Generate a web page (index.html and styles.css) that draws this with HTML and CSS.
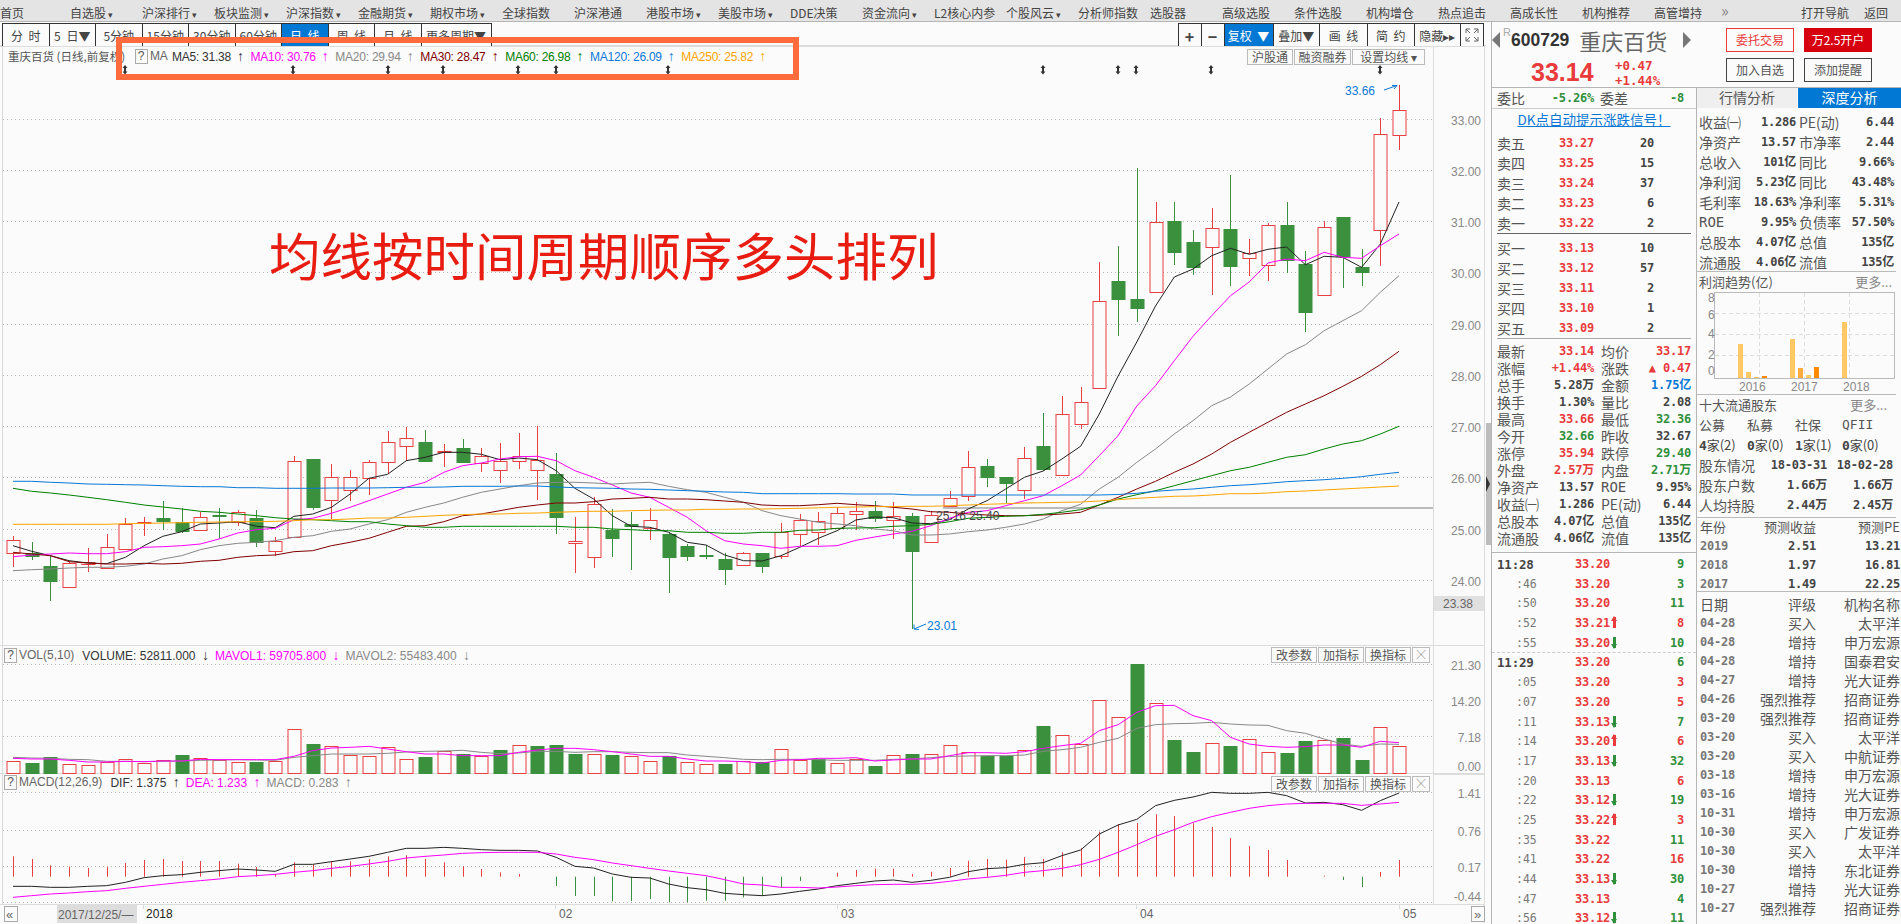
FILE: index.html
```html
<!DOCTYPE html>
<html lang="zh-CN">
<head>
  <meta charset="UTF-8">
  <title>重庆百货 600729</title>
  <link rel="stylesheet" href="styles.css">
</head>
<body>

  <!-- 顶部菜单 -->
  <div class="menu">
    <span class="home">首页</span>
    <span class="more">自选股</span><span class="more">沪深排行</span><span class="more">板块监测</span><span class="more">沪深指数</span><span class="more">金融期货</span><span class="more">期权市场</span><span>全球指数</span><span>沪深港通</span><span class="more">港股市场</span><span class="more">美股市场</span><span>DDE决策</span><span class="more">资金流向</span><span>L2核心内参</span><span class="more">个股风云</span><span>分析师指数</span><span>选股器</span><span>高级选股</span><span>条件选股</span><span>机构增仓</span><span>热点追击</span><span>高成长性</span><span>机构推荐</span><span>高管增持</span>
    <span class="dbl">»</span>
    <span class="nav-open">打开导航</span>
    <span class="nav-back">返回</span>
  </div>

  <div class="main">
    <!-- 左侧 K线 -->
    <div class="left">
      <div class="toolbar">
        <div class="btn-group">
          <button class="w47">分 时</button><button class="w47">5 日▼</button><button class="w47">5分钟</button><button class="w47">15分钟</button><button class="w47">30分钟</button><button class="w47">60分钟</button><button class="w47 on">日 线</button><button class="w47">周 线</button><button class="w47">月 线</button><button class="w70">更多周期▼</button>
        </div>
        <div class="btn-group">
          <button class="w24 big">+</button><button class="w24 big">−</button><button class="w50 on">复权 ▼</button><button class="w47">叠加▼</button><button class="w49">画 线</button><button class="w47">简 约</button><button class="w47">隐藏▸▸</button><button class="w24"><svg class="full-ico" viewBox="0 0 14 14" width="14" height="14"><path d="M1 5V1H5M1 1L5 5M9 1H13V5M13 1L9 5M1 9V13H5M1 13L5 9M13 9V13H9M13 13L9 9"/></svg></button>
        </div>
      </div>

      <div class="chart">
        <svg id="kline" viewBox="0 47 1486 877" width="1486" height="877"></svg>

        <div class="legend">
          <span class="stock-name">重庆百货 (日线,前复权)</span>
          <span class="q">?</span>
          <span class="c-gray">MA</span>
          <span class="c-ma5">MA5: 31.38 <i>↑</i></span>
          <span class="c-ma10">MA10: 30.76 <i>↑</i></span>
          <span class="c-ma20">MA20: 29.94 <i>↑</i></span>
          <span class="c-ma30">MA30: 28.47 <i>↑</i></span>
          <span class="c-ma60">MA60: 26.98 <i>↑</i></span>
          <span class="c-ma120">MA120: 26.09 <i>↑</i></span>
          <span class="c-ma250">MA250: 25.82 <i>↑</i></span>
        </div>

        <div class="tools tools-main">
          <span class="tool t45">沪股通</span><span class="tool t56">融资融券</span><span class="tool t72">设置均线 ▾</span>
        </div>

        <div class="panel-head head-vol">
          <span class="q">?</span>
          <span class="c-gray">VOL(5,10)</span>
          <span class="c-ma5">VOLUME: 52811.000 <i>↓</i></span>
          <span class="c-ma10">MAVOL1: 59705.800 <i>↓</i></span>
          <span class="c-ma20">MAVOL2: 55483.400 <i>↓</i></span>
        </div>
        <div class="tools tools-vol">
          <span class="tool t45">改参数</span><span class="tool t45">加指标</span><span class="tool t45">换指标</span><span class="tool t16">╳</span>
        </div>

        <div class="panel-head head-macd">
          <span class="q">?</span>
          <span class="c-gray">MACD(12,26,9)</span>
          <span class="c-ma5">DIF: 1.375 <i>↑</i></span>
          <span class="c-ma10">DEA: 1.233 <i>↑</i></span>
          <span class="c-ma20">MACD: 0.283 <i>↑</i></span>
        </div>
        <div class="tools tools-macd">
          <span class="tool t45">改参数</span><span class="tool t45">加指标</span><span class="tool t45">换指标</span><span class="tool t16">╳</span>
        </div>

        <div class="note">均线按时间周期顺序多头排列</div>
        <div class="mark-box"></div>
      </div>
    </div>

    <!-- 分隔滑条 -->
    <div class="rail"><div class="thumb"><i></i></div></div>

    <!-- 右侧行情 -->
    <div class="side">
      <div class="quote">
        <div class="quote-main">
          <div class="quote-name">
            <i class="tri-l"></i>
            <sup>R</sup>
            <span class="code">600729</span>
            <span class="name">重庆百货</span>
            <i class="tri-r"></i>
          </div>
          <div class="quote-price">
            <span class="last">33.14</span>
            <div class="chg"><b>+0.47</b><b>+1.44%</b></div>
          </div>
        </div>
        <div class="quote-btns">
          <a class="qb red-line">委托交易</a>
          <a class="qb red-fill">万2.5开户</a>
          <a class="qb">加入自选</a>
          <a class="qb">添加提醒</a>
        </div>
      </div>

      <div class="side-body">
        <div class="col-a">
          <div class="weibi">
            <span>委比</span><b class="dn">-5.26%</b><span>委差</span><b class="dn">-8</b>
          </div>
          <div class="dk"><a>DK点自动提示涨跌信号！</a></div>

          <div class="book line-b">
            <div class="bk"><span>卖五</span><b class="up">33.27</b><b>20</b></div>
            <div class="bk"><span>卖四</span><b class="up">33.25</b><b>15</b></div>
            <div class="bk"><span>卖三</span><b class="up">33.24</b><b>37</b></div>
            <div class="bk"><span>卖二</span><b class="up">33.23</b><b>6</b></div>
            <div class="bk"><span>卖一</span><b class="up">33.22</b><b>2</b></div>
          </div>
          <div class="book line-b pad-t">
            <div class="bk"><span>买一</span><b class="up">33.13</b><b>10</b></div>
            <div class="bk"><span>买二</span><b class="up">33.12</b><b>57</b></div>
            <div class="bk"><span>买三</span><b class="up">33.11</b><b>2</b></div>
            <div class="bk"><span>买四</span><b class="up">33.10</b><b>1</b></div>
            <div class="bk"><span>买五</span><b class="up">33.09</b><b>2</b></div>
          </div>

          <div class="stats">
            <div class="st"><span>最新</span><b class="up">33.14</b><span>均价</span><b class="up">33.17</b></div>
            <div class="st"><span>涨幅</span><b class="up">+1.44%</b><span>涨跌</span><b class="up">▲ 0.47</b></div>
            <div class="st"><span>总手</span><b>5.28万</b><span>金额</span><b class="blue">1.75亿</b></div>
            <div class="st"><span>换手</span><b>1.30%</b><span>量比</span><b>2.08</b></div>
            <div class="st"><span>最高</span><b class="up">33.66</b><span>最低</span><b class="dn">32.36</b></div>
            <div class="st"><span>今开</span><b class="dn">32.66</b><span>昨收</span><b>32.67</b></div>
            <div class="st"><span>涨停</span><b class="up">35.94</b><span>跌停</span><b class="dn">29.40</b></div>
            <div class="st"><span>外盘</span><b class="up">2.57万</b><span>内盘</span><b class="dn">2.71万</b></div>
            <div class="st"><span>净资产</span><b>13.57</b><span class="latin">ROE</span><b>9.95%</b></div>
            <div class="st"><span>收益㈠</span><b>1.286</b><span>PE(动)</span><b>6.44</b></div>
            <div class="st"><span>总股本</span><b>4.07亿</b><span>总值</span><b>135亿</b></div>
            <div class="st"><span>流通股</span><b>4.06亿</b><span>流值</span><b>135亿</b></div>
          </div>

          <div class="ticks">
            <div class="tk"><b class="hm">11:28</b><b class="up">33.20</b><b class="dn">9</b></div>
            <div class="tk"><span>:46</span><b class="up">33.20</b><b class="dn">3</b></div>
            <div class="tk"><span>:50</span><b class="up">33.20</b><b class="dn">11</b></div>
            <div class="tk"><span>:52</span><b class="up">33.21<i class="arr a-up"></i></b><b class="up">8</b></div>
            <div class="tk dash"><span>:55</span><b class="up">33.20<i class="arr a-dn"></i></b><b class="dn">10</b></div>
            <div class="tk"><b class="hm">11:29</b><b class="up">33.20</b><b class="dn">6</b></div>
            <div class="tk"><span>:05</span><b class="up">33.20</b><b class="up">3</b></div>
            <div class="tk"><span>:07</span><b class="up">33.20</b><b class="up">5</b></div>
            <div class="tk"><span>:11</span><b class="up">33.13<i class="arr a-dn"></i></b><b class="dn">7</b></div>
            <div class="tk"><span>:14</span><b class="up">33.20<i class="arr a-up"></i></b><b class="up">6</b></div>
            <div class="tk"><span>:17</span><b class="up">33.13<i class="arr a-dn"></i></b><b class="dn">32</b></div>
            <div class="tk"><span>:20</span><b class="up">33.13</b><b class="up">6</b></div>
            <div class="tk"><span>:22</span><b class="up">33.12<i class="arr a-dn"></i></b><b class="dn">19</b></div>
            <div class="tk"><span>:25</span><b class="up">33.22<i class="arr a-up"></i></b><b class="up">3</b></div>
            <div class="tk"><span>:35</span><b class="up">33.22</b><b class="dn">11</b></div>
            <div class="tk"><span>:41</span><b class="up">33.22</b><b class="up">16</b></div>
            <div class="tk"><span>:44</span><b class="up">33.13<i class="arr a-dn"></i></b><b class="dn">30</b></div>
            <div class="tk"><span>:47</span><b class="up">33.13</b><b class="dn">4</b></div>
            <div class="tk"><span>:56</span><b class="up">33.12<i class="arr a-dn"></i></b><b class="dn">11</b></div>
          </div>
        </div>

        <div class="col-b">
          <div class="tabs"><span>行情分析</span><span class="on">深度分析</span></div>

          <div class="fund">
            <div class="fd"><span>收益㈠</span><b>1.286</b><span>PE(动)</span><b>6.44</b></div>
            <div class="fd"><span>净资产</span><b>13.57</b><span>市净率</span><b>2.44</b></div>
            <div class="fd"><span>总收入</span><b>101亿</b><span>同比</span><b>9.66%</b></div>
            <div class="fd"><span>净利润</span><b>5.23亿</b><span>同比</span><b>43.48%</b></div>
            <div class="fd"><span>毛利率</span><b>18.63%</b><span>净利率</span><b>5.31%</b></div>
            <div class="fd"><span class="latin">ROE</span><b>9.95%</b><span>负债率</span><b>57.50%</b></div>
            <div class="fd"><span>总股本</span><b>4.07亿</b><span>总值</span><b>135亿</b></div>
            <div class="fd"><span>流通股</span><b>4.06亿</b><span>流值</span><b>135亿</b></div>
          </div>

          <div class="sec-title"><span>利润趋势(亿)</span><span class="more-link">更多...</span></div>
          <svg class="profit" viewBox="1698 293 203 102" width="203" height="102">
            <rect class="p-frame" x="1715.5" y="293.5" width="180" height="86"/>
            <path class="p-grid" d="M1760.5 294V379M1805.5 294V379M1850.5 294V379M1716 314.5H1895M1716 335.5H1895M1716 356.5H1895"/>
            <rect class="p-bar" x="1739" y="345" width="5" height="34"/>
            <rect class="p-bar" x="1747" y="373" width="5" height="6"/>
            <rect class="p-bar" x="1755" y="378" width="5" height="1"/>
            <rect class="p-bar2" x="1763" y="377" width="5" height="2"/>
            <rect class="p-bar" x="1791" y="340" width="5" height="39"/>
            <rect class="p-bar3" x="1799" y="369" width="5" height="10"/>
            <rect class="p-bar" x="1807" y="376" width="5" height="3"/>
            <rect class="p-bar2" x="1815" y="368" width="5" height="11"/>
            <rect class="p-bar" x="1843" y="323" width="5" height="56"/>
            <text class="p-y" x="1709" y="303">8</text>
            <text class="p-y" x="1709" y="320">6</text>
            <text class="p-y" x="1709" y="339">4</text>
            <text class="p-y" x="1709" y="360">2</text>
            <text class="p-y" x="1709" y="376">0</text>
            <text class="p-x" x="1740" y="392">2016</text>
            <text class="p-x" x="1792" y="392">2017</text>
            <text class="p-x" x="1844" y="392">2018</text>
          </svg>

          <div class="holders">
            <div class="sec-title"><span>十大流通股东</span><span class="more-link">更多...</span></div>
            <div class="h4"><span>公募</span><span>私募</span><span>社保</span><span class="latin">QFII</span></div>
            <div class="h4 h4b"><span><b>4</b>家(2)</span><span><b>0</b>家(0)</span><span><b>1</b>家(1)</span><span><b>0</b>家(0)</span></div>
            <div class="h3"><span>股东情况</span><b>18-03-31</b><b>18-02-28</b></div>
            <div class="h3"><span>股东户数</span><b>1.66万</b><b>1.66万</b></div>
            <div class="h3"><span>人均持股</span><b>2.44万</b><b>2.45万</b></div>
          </div>

          <div class="forecast">
            <div class="fc fc-h"><span>年份</span><span>预测收益</span><span>预测PE</span></div>
            <div class="fc"><b class="muted">2019</b><b>2.51</b><b>13.21</b></div>
            <div class="fc"><b class="muted">2018</b><b>1.97</b><b>16.81</b></div>
            <div class="fc"><b class="muted">2017</b><b>1.49</b><b>22.25</b></div>
          </div>

          <div class="ratings">
            <div class="rt"><span>日期</span><span>评级</span><span>机构名称</span></div>
            <div class="rt"><b>04-28</b><span>买入</span><span>太平洋</span></div>
            <div class="rt"><b>04-28</b><span>增持</span><span>申万宏源</span></div>
            <div class="rt"><b>04-28</b><span>增持</span><span>国泰君安</span></div>
            <div class="rt"><b>04-27</b><span>增持</span><span>光大证券</span></div>
            <div class="rt"><b>04-26</b><span>强烈推荐</span><span>招商证券</span></div>
            <div class="rt"><b>03-20</b><span>强烈推荐</span><span>招商证券</span></div>
            <div class="rt"><b>03-20</b><span>买入</span><span>太平洋</span></div>
            <div class="rt"><b>03-20</b><span>买入</span><span>中航证券</span></div>
            <div class="rt"><b>03-18</b><span>增持</span><span>申万宏源</span></div>
            <div class="rt"><b>03-16</b><span>增持</span><span>光大证券</span></div>
            <div class="rt"><b>10-31</b><span>增持</span><span>申万宏源</span></div>
            <div class="rt"><b>10-30</b><span>买入</span><span>广发证券</span></div>
            <div class="rt"><b>10-30</b><span>买入</span><span>太平洋</span></div>
            <div class="rt"><b>10-30</b><span>增持</span><span>东北证券</span></div>
            <div class="rt"><b>10-27</b><span>增持</span><span>光大证券</span></div>
            <div class="rt"><b>10-27</b><span>强烈推荐</span><span>招商证券</span></div>
          </div>
        </div>
      </div>
    </div>
  </div>

  <script src="chart.js"></script>
</body>
</html>
```

FILE: styles.css
```css
/* 기본 */
html, body {
  margin: 0;
  height: 100%;
}

body {
  width: 1901px;
  height: 924px;
  overflow: hidden;
  background-color: #fbfbfb;
  color: #555;
  font-family: "Noto Sans CJK SC", "Liberation Sans", sans-serif;
  font-size: 12px;
}

/* 顶部菜单 */
.menu {
  display: flex;
  height: 21px;
  line-height: 25px;
  background-color: #e4e4e4;
  border-bottom: 1px solid #b5b5b5;
  color: #444;
  white-space: nowrap;
}

.menu span {
  flex: 0 0 auto;
  width: 72px;
  box-sizing: border-box;
}

.menu .home {
  width: 70px;
}

.menu .more::after {
  content: " ▾";
  font-size: 9px;
}

.menu .dbl {
  width: 30px;
  margin-left: -5px;
  color: #888;
  font-size: 16px;
  line-height: 20px;
}

.menu .nav-open {
  width: 63px;
  margin-left: 50px;
}

.menu .nav-back {
  width: 36px;
}

/* 主体 */
.main {
  display: flex;
  height: 902px;
}

.left {
  width: 1486px;
  flex: 0 0 auto;
}

.toolbar {
  display: flex;
  justify-content: space-between;
  height: 24px;
  padding: 1px 2px 0 3px;
  box-sizing: border-box;
  border-bottom: 1px solid #dcdcdc;
}

.btn-group {
  display: flex;
  height: 24px;
}

.btn-group button {
  height: 24px;
  margin: 0 0 0 -1px;
  padding: 0;
  background-color: #fbfbfb;
  border: 1px solid #333;
  color: #444;
  font: 12px "Noto Sans CJK SC", "Liberation Sans", sans-serif;
  word-spacing: 3px;
  white-space: nowrap;
}

.btn-group button.on {
  background-color: #0078d4;
  color: #fff;
}

.btn-group button.big {
  font-size: 16px;
  font-weight: bold;
}

.full-ico {
  display: block;
  margin: 0 auto;
  fill: none;
  stroke: #666;
  stroke-width: 1;
}

.w24 { width: 24px; }
.w47 { width: 47.5px; }
.w49 { width: 49px; }
.w50 { width: 50px; }
.w70 { width: 71px; }

/* 차트 */
.chart {
  position: relative;
  height: 877px;
  font-family: "Liberation Sans", "Noto Sans CJK SC", sans-serif;
}

#kline {
  display: block;
}

.legend {
  position: absolute;
  top: 3px;
  left: 8px;
  display: flex;
  align-items: center;
  gap: 6.5px;
  height: 15px;
  line-height: 15px;
  letter-spacing: -0.25px;
  white-space: nowrap;
}

.legend .c-gray {
  margin-right: -2px;
}

.legend i, .panel-head i {
  margin-left: 3px;
  font-size: 14px;
  font-style: normal;
  letter-spacing: 0;
}

.stock-name {
  width: 120px;
  color: #555;
  font-family: "Noto Sans CJK SC", sans-serif;
  letter-spacing: 0;
  font-size: 11.5px;
}

.q {
  display: inline-block;
  width: 11px;
  height: 13px;
  line-height: 13px;
  border: 1px solid #aaa;
  color: #555;
  text-align: center;
}

.legend .q {
  margin-right: -4px;
}

.c-gray { color: #666; }
.c-ma5 { color: #333; }
.c-ma10 { color: #ff00ff; }
.c-ma20 { color: #888; }
.c-ma30 { color: #800000; }
.c-ma60 { color: #008000; }
.c-ma120 { color: #0a78d6; }
.c-ma250 { color: #ffa500; }

.tools {
  position: absolute;
  display: flex;
  gap: 1px;
  font-family: "Noto Sans CJK SC", sans-serif;
  font-size: 12px;
}

.tool {
  height: 14px;
  line-height: 14px;
  border: 1px solid #bbb;
  color: #555;
  text-align: center;
  white-space: nowrap;
}

.t45 { width: 44px; }
.t56 { width: 55px; }
.t72 { width: 71px; }
.t16 { width: 16px; font-size: 9px; }

.tools-main { top: 3px; left: 1247px; }
.tools-vol { top: 601px; left: 1271px; }
.tools-macd { top: 730px; left: 1271px; }

.panel-head {
  position: absolute;
  left: 4px;
  display: flex;
  align-items: center;
  gap: 6px;
  height: 15px;
  line-height: 15px;
  white-space: nowrap;
}

.head-vol { top: 602px; }
.head-macd { top: 729px; }

.panel-head .q {
  margin-right: -4px;
}

.panel-head .c-gray {
  margin-right: 2px;
}

.note {
  position: absolute;
  top: 177px;
  left: 269px;
  color: #e81c10;
  font-family: "Noto Sans CJK SC", sans-serif;
  font-size: 51.5px;
  line-height: 62px;
  white-space: nowrap;
}

.mark-box {
  position: absolute;
  top: -9px;
  left: 116px;
  width: 671px;
  height: 31px;
  border: 6px solid #ff6b3d;
}

/* svg 선 스타일 */
.grid {
  fill: none;
  stroke: #b4b4b4;
  stroke-width: 1;
  stroke-dasharray: 1 3;
}

.frame {
  fill: none;
  stroke: #dcdcdc;
  stroke-width: 1;
}

.cross {
  stroke: #bbb;
  stroke-width: 2;
}

.wick-r { stroke: #e84040; stroke-width: 1; }
.wick-g { stroke: #3a903c; stroke-width: 1; }
.body-r { fill: #fbfbfb; stroke: #e84040; stroke-width: 1; }
.body-g { fill: #3a903c; stroke: #3a903c; stroke-width: 1; }

.ln { fill: none; stroke-width: 1; }
.ln-ma5 { stroke: #222; }
.ln-ma10 { stroke: #ff00ff; }
.ln-ma20 { stroke: #888; }
.ln-ma30 { stroke: #800000; }
.ln-ma60 { stroke: #008000; }
.ln-ma120 { stroke: #0a78d6; }
.ln-ma250 { stroke: #ffa500; }

.axis {
  fill: #888;
  font-size: 12px;
  text-anchor: end;
}

.date {
  fill: #666;
  font-size: 12px;
}

.date-year {
  fill: #222;
  font-size: 12px;
}

.date-box { fill: #ddd; }
.price-box { fill: #e0e0e0; }
.price-txt { fill: #666; font-size: 12px; }
.pt-blue { fill: #0a78d6; font-size: 12px; }
.pt-dark { fill: #444; font-size: 12px; }
.arrow-blue { fill: none; stroke: #0a78d6; stroke-width: 1; }
.flag { fill: #333; }
.pg-btn { fill: #fbfbfb; stroke: #aaa; }
.pg-txt { fill: #666; font-size: 13px; }

/* 슬라이더 */
.rail {
  width: 5px;
  flex: 0 0 auto;
  padding-top: 401px;
}

.thumb {
  position: relative;
  height: 122px;
  background-color: #bcbcbc;
}

.thumb i {
  position: absolute;
  top: 53px;
  left: 0;
  border-top: 8px solid transparent;
  border-bottom: 8px solid transparent;
  border-left: 4px solid #333;
}

/* 오른쪽 패널 */
.side {
  width: 410px;
  flex: 0 0 auto;
  box-sizing: border-box;
  border-left: 1px solid #b5b5b5;
}

.quote {
  display: flex;
  height: 66px;
  box-sizing: border-box;
  border-bottom: 1px solid #b5b5b5;
}

.quote-main {
  width: 234px;
  flex: 0 0 auto;
}

.quote-name {
  display: flex;
  align-items: center;
  height: 36px;
  padding-left: 0;
  white-space: nowrap;
}

.tri-l, .tri-r {
  flex: 0 0 auto;
  border-top: 8px solid transparent;
  border-bottom: 8px solid transparent;
}

.tri-l { border-right: 8px solid #777; }
.tri-r { border-left: 8px solid #777; margin-left: 16px; }

.quote-name sup {
  align-self: flex-start;
  margin: 4px 0 0 3px;
  color: #aaa;
  font: 11px "Liberation Sans", sans-serif;
}

.code {
  color: #333;
  font: bold 17.5px "Liberation Sans", sans-serif;
  margin-left: 0;
}

.name {
  margin-left: 10px;
  color: #666;
  font-size: 22px;
  line-height: 30px;
}

.quote-price {
  display: flex;
  align-items: center;
  height: 29px;
  padding-left: 39px;
  color: #e93b3b;
}

.last {
  width: 84px;
  font: bold 25px "Liberation Sans", sans-serif;
}

.chg {
  display: flex;
  flex-direction: column;
  font: bold 12.5px/15px "DejaVu Sans Mono", monospace;
}

.quote-btns {
  display: grid;
  grid-template-columns: 68px 68px;
  grid-auto-rows: 24px;
  column-gap: 10px;
  row-gap: 6px;
  padding-top: 6px;
}

.qb {
  box-sizing: border-box;
  border: 1px solid #444;
  color: #555;
  font-size: 12px;
  line-height: 22px;
  text-align: center;
}

.red-line {
  border-color: #e93b3b;
  color: #e93b3b;
}

.red-fill {
  border-color: #d7000f;
  background-color: #d7000f;
  color: #fff;
}

.side-body {
  display: flex;
  height: 836px;
  overflow: hidden;
}

.col-a {
  width: 205px;
  flex: 0 0 auto;
  box-sizing: border-box;
  border-right: 1px solid #b5b5b5;
}

.col-b {
  flex: 1;
  min-width: 0;
}

/* 숫자 공통 */
.side-body b {
  color: #444;
  font-family: "DejaVu Sans Mono", "Noto Sans CJK SC", monospace;
  font-size: 12px;
  font-weight: bold;
  letter-spacing: -0.2px;
  white-space: nowrap;
}

.side-body .up { color: #e93b3b; }
.side-body .dn { color: #2f8f3a; }
.side-body .blue { color: #0a78d6; }
.side-body .muted { color: #777; }

.latin {
  font-family: "DejaVu Sans Mono", monospace;
  font-size: 11px;
}

.col-a span, .col-b span {
  font-size: 14px;
}

.weibi {
  display: grid;
  grid-template-columns: 54px 43px 40px 50px;
  height: 20px;
  padding-left: 5px;
  line-height: 20px;
  border-bottom: 1px solid #ccc;
}

.weibi b:nth-child(2), .weibi b:nth-child(4) {
  text-align: right;
}

.weibi span:nth-child(3) {
  padding-left: 6px;
}

.dk {
  height: 24px;
  line-height: 20px;
  text-align: center;
}

.dk a {
  color: #0a78d6;
  font-size: 13.5px;
  text-decoration: underline;
}

.book {
  margin-right: 5px;
  margin-left: 5px;
}

.line-b {
  border-bottom: 1px solid #666;
}

.pad-t {
  padding-top: 4px;
  border-bottom-color: #aaa;
}

.bk {
  display: grid;
  grid-template-columns: 62px 35px 60px;
  height: 20px;
  line-height: 20px;
}

.bk b:last-child {
  text-align: right;
}

.stats {
  height: 214px;
  padding: 4px 0 0 5px;
  box-sizing: border-box;
  border-bottom: 1px solid #b5b5b5;
}

.st {
  display: grid;
  grid-template-columns: 45px 52px 47px 50px;
  height: 17px;
  line-height: 17px;
}

.st b {
  text-align: right;
}

.st span:nth-child(3) {
  padding-left: 7px;
}

.ticks {
  padding: 2px 0 0 5px;
}

.tk {
  display: grid;
  grid-template-columns: 78px 60px 49px;
  box-sizing: border-box;
  height: 19.7px;
  line-height: 19px;
}

.tk .hm {
  font-size: 12.5px;
}

.tk span {
  padding-left: 19px;
  color: #777;
  font: 11.5px/19px "DejaVu Sans Mono", monospace;
}

.tk b:last-child {
  text-align: right;
}

.dash {
  margin-left: -5px;
  padding-left: 5px;
  border-bottom: 1px dashed #ccc;
}

.arr {
  position: relative;
  display: inline-block;
  width: 3px;
  height: 11px;
  margin-left: 3px;
  background-color: currentColor;
  vertical-align: -1px;
}

.arr::after {
  content: "";
  position: absolute;
  left: -2px;
  border-right: 3.5px solid transparent;
  border-left: 3.5px solid transparent;
}

.a-up { color: #e93b3b; }
.a-up::after { top: -1px; border-bottom: 5px solid currentColor; }
.a-dn { color: #2f8f3a; }
.a-dn::after { bottom: -1px; border-top: 5px solid currentColor; }

.tabs {
  display: flex;
  height: 20px;
  line-height: 19px;
  text-align: center;
}

.tabs span {
  width: 100px;
  background-color: #efefef;
}

.tabs span.on {
  flex: 1;
  margin-left: 1px;
  background-color: #0078d4;
  color: #fff;
}

.fund {
  height: 164px;
  margin-right: 5px;
  padding: 4px 0 0 2px;
  box-sizing: border-box;
  border-bottom: 1px solid #bbb;
}

.fd {
  display: grid;
  grid-template-columns: 43px 54px 53px 45px;
  height: 20px;
  line-height: 20px;
}

.fd b {
  text-align: right;
}

.fd span:nth-child(3) {
  padding-left: 3px;
}

.sec-title {
  display: flex;
  justify-content: space-between;
  height: 20px;
  padding: 0 9px 0 2px;
  line-height: 20px;
}

.sec-title span {
  font-size: 13px;
}

.more-link {
  color: #888;
}

.profit {
  display: block;
}

.p-frame { fill: none; stroke: #bbb; }
.p-grid { fill: none; stroke: #ddd; stroke-dasharray: 4 3; }
.p-bar { fill: #ffc864; }
.p-bar2 { fill: #ff8a00; }
.p-bar3 { fill: #ffab40; }
.p-y, .p-x { fill: #888; font: 12px "Liberation Sans", sans-serif; }

.holders {
  height: 124px;
  box-sizing: border-box;
  border-top: 1px solid #bbb;
  border-bottom: 1px solid #bbb;
  margin-right: 5px;
}

.h4 {
  display: grid;
  grid-template-columns: 48px 48px 47px 48px;
  height: 20px;
  padding-left: 2px;
  line-height: 20px;
}

.h4 span {
  font-size: 13px;
}

.h4b span {
  color: #444;
}

.h4b b {
  font-size: 13px;
}

.h3 {
  display: grid;
  grid-template-columns: 62px 66px 66px;
  height: 20px;
  padding-left: 2px;
  line-height: 20px;
}

.h3 b {
  text-align: right;
}

.forecast {
  display: grid;
  row-gap: 5px;
  height: 74px;
  padding-top: 2px;
  box-sizing: border-box;
  border-bottom: 1px solid #bbb;
}

.fc {
  display: grid;
  grid-template-columns: 49px 67px 84px;
  height: 14px;
  padding-left: 3px;
  line-height: 14px;
}

.fc > :nth-child(2), .fc > :nth-child(3) {
  text-align: right;
}

.fc-h span {
  font-size: 13px;
}

.ratings {
  padding-top: 3px;
}

.rt {
  display: grid;
  grid-template-columns: 49px 67px 84px;
  height: 19px;
  padding-left: 3px;
  line-height: 19px;
}

.rt > :nth-child(2), .rt > :nth-child(3) {
  text-align: right;
  white-space: nowrap;
}

.rt b {
  color: #777;
}

.rt span {
  font-size: 14px;
}
```

FILE: chart.js
```js
// 일봉 데이터: [양봉여부, 고가y, 몸통위y, 몸통아래y, 저가y] (화면 px 기준)
const candles = [
  [1,537,541,554,568],[0,543,554,557,561],[0,557,567,582,602],[1,562,564,588,589],[1,549,563,565,573],
  [1,535,548,569,570],[1,519,525,550,551],[1,518,523,524,537],[0,502,519,522,531],[0,509,523,532,534],
  [1,513,518,531,532],[0,509,516,517,540],[1,511,513,523,527],[0,511,519,543,548],[1,538,542,552,557],
  [1,457,462,538,539],[0,460,460,508,511],[1,465,478,501,520],[1,471,478,491,502],[1,461,463,479,496],
  [1,432,443,463,475],[1,428,439,447,462],[0,431,443,462,463],[1,445,452,453,468],[0,440,449,463,464],
  [1,449,457,464,473],[1,444,462,471,484],[1,434,457,462,470],[1,427,461,471,501],[0,454,475,518,535],
  [1,518,542,544,574],[1,498,505,558,569],[0,510,531,539,558],[0,513,525,527,571],[1,509,521,529,541],
  [0,533,535,558,594],[0,545,547,557,562],[0,546,556,557,560],[0,554,560,570,586],[1,553,554,566,567],
  [0,554,554,567,574],[1,524,533,557,560],[1,515,521,535,548],[1,513,522,533,546],[1,508,514,529,529],
  [1,503,512,515,531],[0,502,512,519,523],[1,503,517,521,540],[0,514,517,552,630],[1,512,516,543,543],
  [1,492,499,507,508],[1,452,468,497,502],[0,460,467,478,488],[0,478,478,484,504],[1,448,459,491,500],
  [0,414,447,470,472],[1,397,415,476,476],[1,388,403,425,430],[1,263,302,389,390],[0,247,282,300,337],
  [0,169,300,309,323],[1,203,223,293,294],[0,203,222,253,266],[0,231,243,268,276],[1,209,229,248,296],
  [0,176,230,267,287],[1,240,254,259,277],[1,224,226,266,282],[0,203,226,261,274],[0,252,265,313,333],
  [1,222,228,296,297],[0,218,218,257,289],[0,250,268,273,287],[1,119,135,231,267],[1,86,111,136,151]
];

// 균선 (화면 y px)
const ma = {
  ma5: [546.7,552.3,556.7,561.7,564,564.7,558.3,546.7,537.3,532.7,525,524,522.7,527.3,528.7,517.3,515,508.3,495,479.3,475.3,461.7,458.3,453.3,453.3,455.3,460.7,459,460.7,471.7,489.3,500,516.7,527.3,528.3,533.3,543.3,546,556,561.7,562,556.7,548.3,539.3,531.7,521,518,518.7,524,524.7,520.7,510,501.7,490,478.3,472,460,447.3,415,377,343,307,278,270,256.7,249.3,255.3,250.3,248,265.7,257.3,258.3,268.3,245,203],
  ma10: [557.7,556,555,554,554.7,554.7,552.7,548.3,547.7,546.7,545,540,534,530.7,529.3,520.7,519.3,514.3,508.3,501.7,495,488.3,483.3,473.3,466.7,464,460,457.7,457.3,461.7,471.7,478.3,486,494,498.3,508.3,518.3,531.7,541.7,545,546.7,549.3,547.3,547.3,546.7,541.3,538,535,532.3,526.7,519.3,513.3,511.7,506.7,501.7,496.7,486.7,476,456.7,436.7,407,386.7,361.7,337.3,316.7,296.7,283,264,260,261.7,253.3,258.3,259.3,246.7,235],
  ma20: [571.7,570.7,570,569,568.3,568.3,567.3,565,560,556.7,550.7,546.7,544.3,543.3,541.7,538.3,536.7,532.3,530,525,520.7,513.3,508.3,504,498.3,493.3,490,486.7,484,483.3,483.3,484,485,484,483.3,487.3,490.7,493.3,498.3,503.3,511.7,516.7,520,523.3,525,526.7,530,531.7,536,536,535,532.7,531,528.3,525,520,511.7,505.3,490,478.3,463.3,450,435,421.7,406.7,398,385,370,355,345.7,331.7,321.7,311.7,293.3,276.7],
  ma30: [553.3,555,556.7,562.7,564,565,565,564.3,565,564.3,562.3,561.3,558.3,556.7,556,552.7,551.7,546.7,543.3,539.3,533.3,527.3,526.7,522.7,516.7,515,511.7,508.3,506,504,504,502.7,500,499.3,498.3,500,500,500.7,502,503.3,506,506.7,506.7,505.7,504.3,505.7,506.7,508.3,510,512.7,513.3,515,516,516.7,516.7,516,515,513.3,506,498.3,490,482.3,473.3,465,455,443.3,433.3,423.3,413.3,405,396.7,387.3,377.3,365.7,352.3],
  ma60: [489.3,492.3,494,496,498.3,500.7,503.3,506,508,510,512.3,513.3,515,516.7,518.7,520,520.7,521.7,522.7,522.7,525,526.7,528.3,528.3,527.3,527.3,527.3,527.3,527.3,527.3,528.3,528.3,530,530.7,531.7,531.7,533.3,533.3,534.3,534.3,533.3,533.3,531.3,531,529.3,529,528.7,527.3,526.7,525.3,522.7,519.3,518.3,517.3,516.7,515.3,513.3,510.7,506,500,495.7,491.7,486.7,481.7,476.7,471.7,468.3,463.3,458.3,455.7,450,445,441.7,435,427.3],
  ma120: [482.3,482.3,483.3,484,485,485.3,485.7,486,486.7,487.3,487.7,487.7,488.7,488.7,489.3,489.3,489.3,489,489,489,488.7,488.3,488.3,488,487.3,487.3,487.3,487,487,488,488.7,489,489.3,490,490.3,491,491.7,492.3,493,493.3,494.7,494.7,494.7,494.7,494.7,495,495,495,496,496,496,496,496,496,496,496,496,496,496,495.5,494.3,492.3,491,490,488.3,486.7,485.7,484.3,482.7,481.7,480.7,479.3,477.7,475.3,473.3],
  ma250: [525.3,525.3,525.3,525.3,525.3,525.3,524.7,524.4,524,523.7,523.3,523,522.7,522.7,522.3,521.7,520.7,520.7,520,519,519,518.3,517.3,516.3,515.7,515,515,514.3,514,513.3,512.7,512.3,512.3,511.7,511.3,511,511,510.3,510.3,510,510,509.7,509.3,508.8,508.3,508,507.7,507.5,507.3,507.3,506.7,506,505.3,504.7,504,503.7,503.3,503,502,500.7,499.3,498.3,497.3,497,496,494.7,494.7,494,492.7,492,491,490,489,488,487]
};

// 아래 두 패널은 패널 픽셀의 3배 좌표로 기록 (y = 640 + v / 3)
const volTop = [367,372,354,376,379,368,361,372,364,348,357,364,368,369,367,271,315,320,349,352,325,361,354,337,346,352,333,319,321,318,345,346,348,352,367,352,370,376,375,367,370,331,362,359,373,361,381,349,345,346,319,339,352,352,334,261,289,315,184,235,75,193,303,339,313,321,301,340,342,306,304,297,363,265,322];
const volGreen = [1,2,9,13,16,22,24,26,28,29,30,32,35,38,40,43,46,48,52,53,55,60,62,63,65,68,69,71,72];
const mavol1 = [358,360,360,364,369,369,367,368,366,366,361,362,362,362,362,352,335,327,325,322,330,338,345,345,350,350,350,340,333,328,328,332,338,345,352,352,360,366,366,368,372,364,362,358,358,356,366,363,360,360,350,341,341,343,338,328,320,313,275,257,220,200,199,230,245,295,315,322,325,323,318,318,325,307,311];
const mavol2 = [355,357,358,361,362,367,367,368,367,366,364,363,362,363,364,355,350,345,345,345,343,339,337,336,334,340,344,342,337,337,340,338,338,340,341,341,348,352,356,361,362,361,361,362,364,364,364,361,360,356,352,351,350,350,348,337,332,325,310,298,268,257,254,253,250,255,258,259,275,283,300,315,322,315,316];
const macdEnd = [652,660,679,683,687,684,672,663,660,666,666,666,674,684,705,670,677,666,667,660,652,649,660,670,682,690,700,705,713,741,771,771,787,786,780,790,790,785,785,775,770,746,726,713,701,693,689,689,705,698,687,665,660,662,654,660,640,628,578,555,552,526,531,553,564,597,621,633,663,713,710,723,744,699,663];
const dif = [742,742,745,745,742,740,730,716,710,707,700,695,690,693,697,676,676,668,660,652,640,628,628,625,628,632,634,634,636,655,682,687,705,715,717,735,746,752,763,767,770,765,757,750,740,733,726,723,730,724,715,698,689,686,676,671,650,633,585,558,541,500,484,474,460,463,463,460,470,492,490,497,514,485,462];
const dea = [775,770,765,762,758,755,748,742,736,730,725,720,713,710,706,700,695,688,682,675,667,657,652,648,643,641,640,640,640,645,655,662,672,680,688,696,703,710,722,735,738,745,745,747,744,740,737,736,736,733,727,720,715,709,700,695,688,677,661,640,617,592,572,550,533,520,508,500,495,493,493,493,499,495,490];

const X = i => 13 + i * 18.73;
const Z = v => 640 + v / 3;
const px = v => Math.round(v) + 0.5;

let out = '';

function path(cls, d) {
  out += `<path class="${cls}" d="${d}"/>`;
}

function text(cls, x, y, str) {
  out += `<text class="${cls}" x="${x}" y="${y}">${str}</text>`;
}

function polyline(cls, ys) {
  const pts = ys.map((y, i) => `${X(i).toFixed(1)},${y}`).join(' ');
  out += `<polyline class="ln ${cls}" points="${pts}"/>`;
}

// 점선 격자와 가격축
const priceY = p => 119.5 + (33 - p) * 51.25;
for (let p = 24; p <= 33; p++) {
  const y = px(priceY(p));
  path('grid', `M3 ${y}H1434`);
  text('axis', 1481, y + 5, p.toFixed(2));
}

[[665.5, '21.30', 671], [701.5, '14.20', 707], [737.5, '7.18', 743], [773, '0.00', 772]].forEach(r => {
  if (r[0] < 770) path('grid', `M3 ${r[0]}H1434`);
  text('axis', 1481, r[2], r[1]);
});
[[793.5, '1.41', 799], [831.5, '0.76', 837], [867.5, '0.17', 873], [903.5, '-0.44', 902]].forEach(r => {
  path('grid', `M3 ${r[0]}H1434`);
  text('axis', 1481, r[2], r[1]);
});

// 외곽 구분선
path('frame', 'M0 47.5H1485M0 646.5H1485M0 774.5H1485M0 905.5H1485M2.5 47V905M1433.5 47V905M1484.5 47V924M1434 775.5H1485');
path('cross', 'M943 509H1433');

// 표시 화살표 (봉 상단 마커)
[125, 293, 388, 443, 518, 556, 668, 1043, 1118, 1136, 1211, 1380].forEach(x => {
  path('flag', `M${x} 66l2.5 3h-1.5v3.5h1.5l-2.5 3l-2.5 -3h1.5v-3.5h-1.5z`);
});

// 캔들
candles.forEach((c, i) => {
  const x = px(X(i));
  const s = c[0] ? 'r' : 'g';
  path('wick-' + s, `M${x} ${c[1]}V${c[2]}M${x} ${c[3]}V${c[4]}`);
  out += `<rect class="body-${s}" x="${x - 6.5}" y="${c[2] + 0.5}" width="13" height="${c[3] - c[2]}"/>`;
});

Object.keys(ma).forEach(k => polyline('ln-' + k, ma[k]));

// 최고/최저 표시
text('pt-blue', 1345, 96, '33.66');
path('arrow-blue', 'M1384 91L1397 86.5M1392 86.5L1397 86.5L1394 90');
text('pt-blue', 927, 631, '23.01');
path('arrow-blue', 'M926 625L914 630M914 625.5L914 630L919 630.5');
text('pt-dark', 936, 521, '25.16 25.40');

// 현재 가격 상자
out += '<rect class="price-box" x="1434" y="597" width="50" height="15"/>';
text('price-txt', 1443, 609, '23.38');

// 거래량
volTop.forEach((v, i) => {
  const x = px(X(i));
  const s = volGreen.includes(i) ? 'g' : 'r';
  out += `<rect class="body-${s}" x="${x - 6.5}" y="${px(Z(v))}" width="13" height="${Math.round(Z(402) - Z(v))}"/>`;
});
polyline('ln-ma20', mavol2.map(Z));
polyline('ln-ma10', mavol1.map(Z));

// MACD
const zero = Z(713);
macdEnd.forEach((v, i) => {
  if (v === 713) return;
  const x = px(X(i));
  path(v < 713 ? 'wick-r' : 'wick-g', `M${x} ${zero.toFixed(1)}V${Z(v).toFixed(1)}`);
});
polyline('ln-ma5', dif.map(Z));
polyline('ln-ma10', dea.map(Z));

// 날짜축
out += '<rect class="date-box" x="57" y="906" width="80" height="18"/>';
text('date', 58, 920, '2017/12/25/—');
text('date-year', 146, 919, '2018');
text('date', 559, 919, '02');
text('date', 841, 919, '03');
text('date', 1140, 919, '04');
text('date', 1403, 919, '05');
path('frame', 'M143.5 905V910M555.5 905V910M837.5 905V910M1136.5 905V910M1399.5 905V910');
out += '<rect class="pg-btn" x="4.5" y="907.5" width="13" height="15"/>';
text('pg-txt', 6, 920, '«');
out += '<rect class="pg-btn" x="1471.5" y="907.5" width="13" height="15"/>';
text('pg-txt', 1474, 920, '»');

document.getElementById('kline').innerHTML = out;
```
